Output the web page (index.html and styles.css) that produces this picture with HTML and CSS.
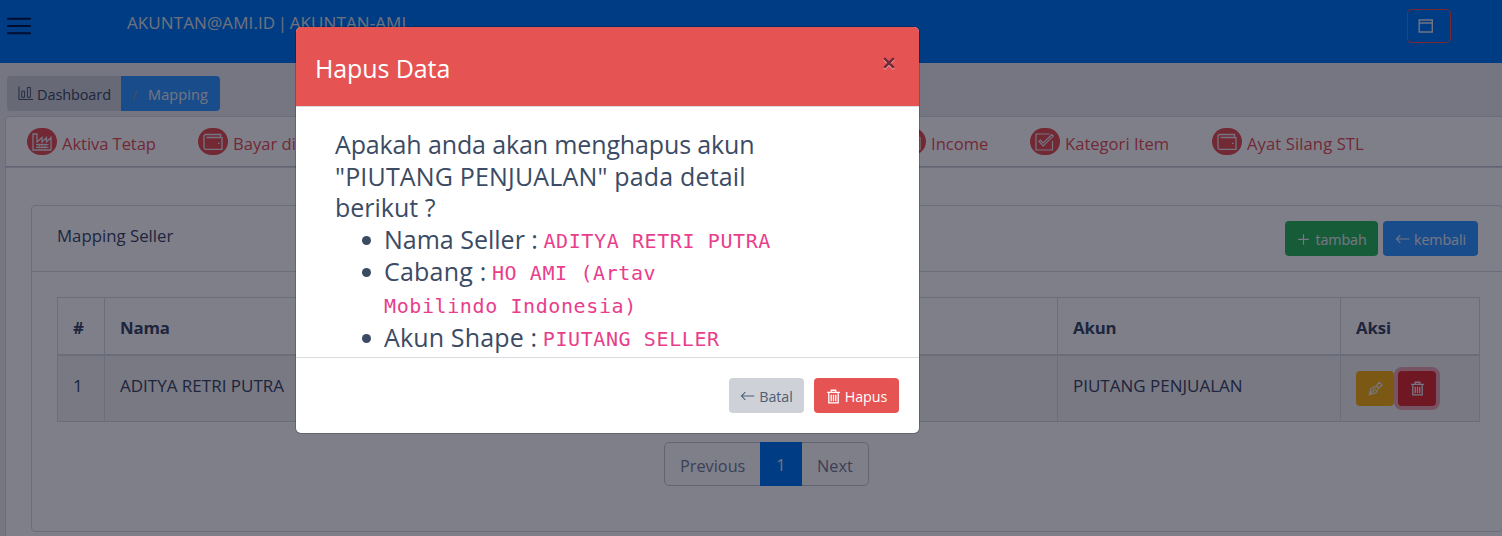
FILE: index.html
```html
<!DOCTYPE html>
<html lang="id">
<head>
<meta charset="utf-8">
<title>Mapping Seller</title>
<link rel="stylesheet" href="styles.css">
</head>
<body>
<svg class="sprite" aria-hidden="true">
  <symbol id="trash" viewBox="0 0 16 16"><path d="M1.2 3.6h13.6M5.6 3.2V1.3h4.8v1.9M3 4.2v10.5h10V4.2M5.6 6v7M8 6v7M10.4 6v7" fill="none" stroke="currentColor" stroke-width="1.4"/></symbol>
  <symbol id="arrow" viewBox="0 0 16 16"><path d="M15.3 7.5H1.5M5.7 3.3L1.5 7.5l4.2 4.2" fill="none" stroke="currentColor" stroke-width="1.1"/></symbol>
  <symbol id="wallet" viewBox="0 0 20 18"><path d="M17.6 4.2V1.5H2.8Q1 1.5 1 3v11.6Q1 16.4 2.8 16.4H19V4.6H3.6M3.4 4.4H17M15 10.4h1.6" fill="none" stroke="currentColor" stroke-width="1.3"/></symbol>
</svg>
<div class="page">
  <header class="topbar">
    <svg class="burger" viewBox="0 0 24 18"><path d="M1 1.7h22M1 9h22M1 16.3h22" stroke="currentColor" stroke-width="1.9" stroke-linecap="round"/></svg>
    <span class="account">AKUNTAN@AMI.ID | AKUNTAN-AMI</span>
    <button class="window-btn"><svg viewBox="0 0 16 14"><path d="M1.2 1h13.1v12H1.2zM1.2 4h13" fill="none" stroke="currentColor" stroke-width="1.4"/></svg></button>
  </header>
  <nav class="crumbs">
    <a class="crumb"><svg viewBox="0 0 16 15"><path d="M1 0v13.8h15M4 11.5V5h3v6.5zM10 11.5V1h3.2v10.5z" fill="none" stroke="currentColor" stroke-width="1"/></svg><span>Dashboard</span></a>
    <a class="crumb crumb-active"><i>/</i><span>Mapping</span></a>
  </nav>
  <main class="panel">
    <nav class="tabs">
      <a class="tab tab-aktiva"><b class="badge"><svg viewBox="0 0 20 18"><path d="M1 17V1h4v8l5-4.5V9l4.5-4.5V9L19 4.5V17zM4 11.7h12.5M4 14.3h12.5" fill="none" stroke="currentColor" stroke-width="1.3"/><path d="M7 10.5v5M10 10.5v5M13 10.5v5" stroke="currentColor"/></svg></b><span>Aktiva Tetap</span></a>
      <a class="tab tab-bayar"><b class="badge"><svg viewBox="0 0 20 18"><use href="#wallet"/></svg></b><span>Bayar di</span></a>
      <a class="tab tab-income"><b class="badge"><svg viewBox="0 0 20 18"><use href="#wallet"/></svg></b><span>Income</span></a>
      <a class="tab tab-kategori"><b class="badge"><svg viewBox="0 0 20 18"><path d="M14.5 1H1v16h16.5V8M4 8.5l1.4-1.3L8.2 10l8.6-8.3 1.5 1.4L8.2 13z" fill="none" stroke="currentColor" stroke-width="1.2"/></svg></b><span>Kategori Item</span></a>
      <a class="tab tab-ayat"><b class="badge"><svg viewBox="0 0 20 18"><use href="#wallet"/></svg></b><span>Ayat Silang STL</span></a>
    </nav>
    <section class="card">
      <div class="card-head">
        <span class="card-title">Mapping Seller</span>
        <div class="card-actions">
          <button class="btn btn-add"><svg viewBox="0 0 16 16"><path d="M8 2v11.6M2.2 7.8h11.6" stroke="currentColor" stroke-width="1.2"/></svg><span>tambah</span></button>
          <button class="btn btn-back"><svg viewBox="0 0 16 16"><use href="#arrow"/></svg><span>kembali</span></button>
        </div>
      </div>
      <table class="grid">
        <colgroup><col class="c-no"><col class="c-name"><col class="c-akun"><col class="c-aksi"></colgroup>
        <thead><tr><th>#</th><th>Nama</th><th>Akun</th><th>Aksi</th></tr></thead>
        <tbody><tr><td>1</td><td>ADITYA RETRI PUTRA</td><td>PIUTANG PENJUALAN</td>
          <td><div class="row-actions"><button class="btn btn-edit"><svg viewBox="0 0 16 16"><path d="M1.5 14.5L3.3 7.8 8.8 5.2 11 7.4 8.6 12.6zM1.5 14.5l4.6-4.6M8.8 5.2l3.2-3.8 3 3L11 7.4" fill="none" stroke="currentColor" stroke-width="1.3"/><circle cx="6.9" cy="9.1" r="1.2" fill="none" stroke="currentColor"/></svg></button><button class="btn btn-del"><svg viewBox="0 0 16 16"><use href="#trash"/></svg></button></div></td></tr></tbody>
      </table>
      <div class="pager"><a class="prev">Previous</a><a class="current">1</a><a class="next">Next</a></div>
    </section>
  </main>
</div>
<div class="backdrop">
  <div class="modal">
    <div class="modal-head"><span class="modal-title">Hapus Data</span><svg class="close" viewBox="0 0 12 12"><path d="M1.2 2.2l9.6 9.6M10.8 2.2L1.2 11.8" class="close-glow"/><path d="M1.2 1.2l9.6 9.6M10.8 1.2L1.2 10.8" class="close-x"/></svg></div>
    <div class="modal-body">
      <p><span class="q1">Apakah anda akan menghapus akun</span><br><span class="q2">"PIUTANG PENJUALAN" pada detail</span><br><span class="q3">berikut ?</span></p>
      <ul>
        <li>Nama Seller : <code>ADITYA RETRI PUTRA</code></li>
        <li><span class="l2">Cabang :</span> <code>HO AMI (Artav<br>Mobilindo Indonesia)</code></li>
        <li><span class="l3">Akun Shape :</span> <code>PIUTANG SELLER</code></li>
      </ul>
    </div>
    <div class="modal-foot">
      <button class="btn btn-cancel"><svg viewBox="0 0 16 16"><use href="#arrow"/></svg><span>Batal</span></button>
      <button class="btn btn-danger"><svg viewBox="0 0 16 16"><use href="#trash"/></svg><span>Hapus</span></button>
    </div>
  </div>
</div>
</body>
</html>
```
FILE: styles.css
```css
* { box-sizing: border-box; }
body { margin: 0; width: 1502px; height: 536px; overflow: hidden; background: #ebedef; color: #3c4b64; font: 16px/24px "Open Sans", "Noto Sans", sans-serif; }
button { font: inherit; margin: 0; }
.sprite { display: none; }
.page { width: 1502px; height: 536px; overflow: hidden; }
.topbar { height: 63px; display: flex; align-items: flex-start; background: #0078f0; color: #fff; }
.burger { width: 24px; height: 18px; margin: 17px 0 0 7px; color: #001a48; flex: none; }
.account { margin: 11px 0 0 96px; width: 1280px; color: #dfe3e8; font-size: 17px; letter-spacing: .1px; word-spacing: -2px; white-space: nowrap; }
.window-btn { width: 44px; height: 34px; flex: none; margin-top: 9px; padding: 0 0 0 10px; background: none; border: 1px solid #e55353; border-radius: 4px; color: #e4e6ee; }
.window-btn svg { display: block; width: 16px; height: 14px; }
.crumbs { display: flex; margin: 13px 0 6px 7px; height: 35px; width: 213px; border-radius: 4px; overflow: hidden; font-size: 14.5px; letter-spacing: -.1px; }
.crumb { display: flex; align-items: center; width: 114px; padding: 2px 0 0 11px; background: #ced2d8; }
.crumb svg { width: 15px; height: 15px; margin: -3px 4px 0 0; }
.crumb-active { width: 99px; background: #39f; color: #e4e8ee; letter-spacing: .1px; }
.crumb-active i { color: #8e97a5; width: 16px; font-style: normal; }
.panel { margin-left: 6px; height: 430px; background: #fff; box-shadow: 0 0 0 1px #d8dbe0; border-radius: 4px 0 0; }
.tabs { display: flex; height: 50px; padding: 11px 0 0 21px; color: #e55353; border-bottom: 1px solid #c4c9d0; box-shadow: 0 1px 0 #d8dbe0; font-size: 16.6px; }
.tab { display: flex; gap: 5px; flex: none; white-space: nowrap; }
.tab span { padding-top: 4px; }
.tab-aktiva { width: 171px; letter-spacing: -.08px; }
.tab-bayar { width: 698px; }
.tab-income { width: 134px; }
.tab-kategori { width: 182px; }
.tab-ayat { letter-spacing: .1px; }
.badge { width: 30px; height: 27px; border-radius: 14px; background: #e55353; color: #e9e9f0; display: grid; place-items: center; }
.badge svg { width: 20px; height: 18px; }
.card { margin: 38px 0 0 25px; width: 1472px; height: 327px; border: 1px solid #d8dbe0; border-radius: 4px; }
.card-head { height: 66px; display: flex; justify-content: space-between; padding: 15px 24px 0 25px; border-bottom: 1px solid #d8dbe0; }
.card-title { padding-top: 3px; font-size: 16.8px; }
.card-actions { display: flex; gap: 5px; }
.btn { height: 35px; border: 0; border-radius: 4px; padding: 2px 0 0; display: flex; align-items: center; justify-content: center; gap: 4px; color: #eceef5; font-size: 14.3px; letter-spacing: -.1px; }
.btn svg { width: 15px; height: 15px; margin-top: -1px; flex: none; }
.btn-add { width: 93px; background: #2eb85c; }
.btn-back { width: 95px; background: #39f; }
.grid { margin: 25px 0 0 25px; width: 1423px; table-layout: fixed; border-collapse: collapse; }
.c-no { width: 47px; } .c-name { width: 953px; } .c-akun { width: 283px; } .c-aksi { width: 139px; }
.grid th, .grid td { border: 1px solid #d8dbe0; padding: 0 15px; text-align: left; white-space: nowrap; }
.grid th { height: 57px; border-bottom-width: 2px; padding-top: 5px; font-weight: 700; font-size: 16.8px; letter-spacing: -.15px; }
.grid td { height: 67px; vertical-align: top; padding-top: 18px; background: #f2f2f3; font-size: 17px; letter-spacing: 0; }
.grid td:last-child { padding-top: 15px; }
.row-actions { display: flex; gap: 4px; }
.btn-edit { width: 38px; background: #f9b115; }
.btn-del { width: 38px; background: #de3030; box-shadow: 0 0 0 4px #eea9b2; }
.pager { display: flex; width: 205px; height: 44px; margin: 20px 0 0 632px; border: 1px solid #c4c9d0; border-radius: 5px; line-height: 46px; color: #768192; font-size: 16.3px; }
.prev { width: 95px; padding-left: 15px; }
.current { width: 42px; height: 44px; margin-top: -1px; background: #0078f0; color: #e4e6ee; text-align: center; }
.next { padding-left: 15px; }
.backdrop { position: absolute; inset: 0; background: rgba(0, 0, 21, .5); padding: 27px 0 0 296px; }
.modal { width: 623px; height: 406px; background: #fff; border-radius: 5px; overflow: hidden; box-shadow: 0 0 0 1px rgba(0, 0, 21, .2); }
.modal-head { height: 80px; display: flex; justify-content: space-between; padding: 25px 24px 0 19px; background: #e55353; color: #fff; border-bottom: 1px solid #d8dbe0; font-size: 25px; line-height: 32px; letter-spacing: -.1px; }
.close { width: 12px; height: 12px; margin-top: 5px; overflow: visible; }
.close path { stroke-width: 2.6; }
.close-glow { stroke: #f4b0b0; }
.close-x { stroke: #732a3a; }
.modal-body { height: 251px; padding: 22px 0 0 39px; border-bottom: 1px solid #d8dbe0; font-size: 25px; line-height: 31.5px; white-space: nowrap; }
.modal-body p, .modal-body ul { margin: 0; }
.modal-body ul { padding-left: 49px; line-height: 32.7px; list-style: none; margin-top: -1px; }
.modal-body li::before { content: ""; display: inline-block; width: 9px; height: 9px; margin: 0 13px 4px -22px; border-radius: 50%; background: #3c4b64; }
.modal-body code { font-family: "DejaVu Sans Mono", monospace; font-size: 20px; line-height: 20px; letter-spacing: .6px; color: #e83e8c; margin-left: -1px; vertical-align: 1px; }
.q1 { letter-spacing: -.13px; }
.q2 { letter-spacing: .17px; }
.l2 { letter-spacing: .2px; }
.l3 { letter-spacing: .15px; }
.modal-foot { display: flex; justify-content: flex-end; gap: 10px; padding: 20px 20px 0; }
.btn-cancel { width: 75px; background: #ced2d8; color: #4f5d73; }
.btn-danger { width: 85px; background: #e55353; color: #fff; }
```
